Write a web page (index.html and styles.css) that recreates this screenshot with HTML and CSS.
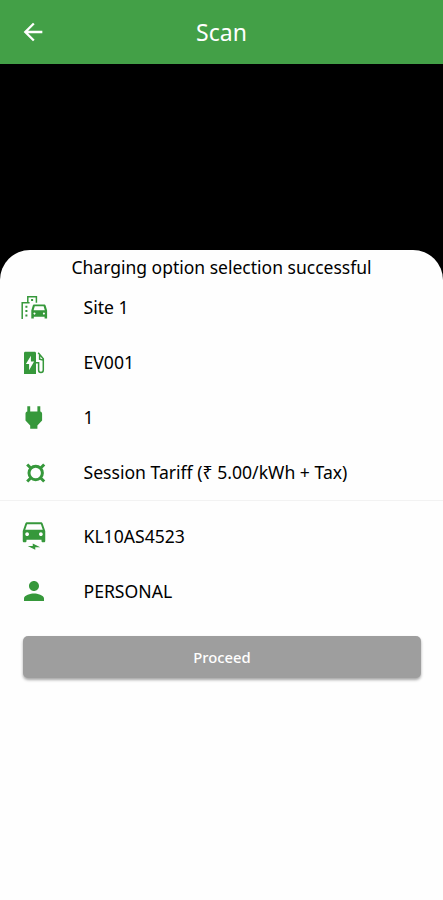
FILE: index.html
```
<!DOCTYPE html>
<html lang="en">
<head>
<meta charset="utf-8">
<title>Scan</title>
<link rel="stylesheet" href="styles.css">
</head>
<body>
<header class="bar">
  <svg class="back" viewBox="0 0 24 24"><path d="M20 11H7.83l5.59-5.59L12 4l-8 8 8 8 1.41-1.41L7.83 13H20z"/></svg>
  <h1 class="title">Scan</h1>
</header>
<main class="sheet">
  <h2 class="message">Charging option selection successful</h2>
  <ul class="rows">
    <li class="row">
      <svg class="icon" viewBox="0 0 30 30"><path class="line" d="M3.200 27V10.700h5.600V4.700h8.600v6M8.800 10.700h1.800"/><path d="M6.400 13.800h2v2h-2zM6.400 18.100h2v2h-2zM6.400 22.500h2v2h-2zM12.100 7.100h2v2h-2z"/><path fill-rule="evenodd" d="M15.300 12.600h9.800c.8 0 1.400.4 1.600 1.100l1.400 4.900v8h-2.500v-1.900H14.800v1.900h-2.500v-8l1.400-4.900c.2-.7.800-1.100 1.600-1.100zM15.800 14.300l-1.200 3.900h11.200l-1.200-3.900zM15.500 20.500a1 1 0 1 0 .01 0zM24.900 20.500a1 1 0 1 0 .01 0z"/></svg>
      <span class="label">Site 1</span>
    </li>
    <li class="row">
      <svg class="icon" viewBox="0 0 30 30"><path fill-rule="evenodd" d="M6.400 4.700h9.200c.8 0 1.400.6 1.400 1.400V27H5V6.100c0-.8.600-1.400 1.400-1.400zM11.900 8.700 6.900 17h3.200v6.300l5-8.800h-3.200z"/><path class="line" d="M17 15.700h2.600V23c0 3.400 4.700 3.400 4.700 0V11.700l-5.100-5.900M20.600 7.900v4.200l3.500 1"/></svg>
      <span class="label">EV001</span>
    </li>
    <li class="row">
      <svg class="icon" viewBox="0 0 30 30"><path d="M8.300 4.200h2.900v5.400h7.200V4.200h2.900v5.400c1.100.2 1.800 1 1.800 2.200v6.700l-4.700 5v3.200h-7.200v-3.200l-4.700-5v-6.700c0-1.200.7-2 1.800-2.200z"/></svg>
      <span class="label">1</span>
    </li>
    <li class="row">
      <svg class="icon" viewBox="0 0 30 30"><circle class="ring" cx="16.700" cy="16" r="6.700"/><path class="ring" d="m8.200 7.500 4 4M25.200 7.500l-4 4M8.200 24.500l4-4M25.200 24.500l-4-4"/></svg>
      <span class="label">Session Tariff (₹ 5.00/kWh + Tax)</span>
    </li>
  </ul>
  <ul class="rows vehicle">
    <li class="row">
      <svg class="icon" viewBox="0 0 24 24"><path d="M18.920 2.010C18.720 1.420 18.160 1 17.500 1h-11c-.66 0-1.210.42-1.420 1.010L3 8v8c0 .55.45 1 1 1h1c.55 0 1-.45 1-1v-1h12v1c0 .55.45 1 1 1h1c.55 0 1-.45 1-1V8l-2.080-5.990zM6.500 12c-.83 0-1.500-.67-1.500-1.500S5.670 9 6.500 9 8 9.670 8 10.500 7.330 12 6.500 12zm11 0c-.83 0-1.500-.67-1.500-1.500s.67-1.500 1.500-1.500 1.500.67 1.500 1.500-.67 1.500-1.500 1.500zM5 7l1.500-4.500h11L19 7H5zM7 20h4v-2l6 3h-4v2z"/></svg>
      <span class="label">KL10AS4523</span>
    </li>
    <li class="row">
      <svg class="icon" viewBox="0 0 24 24"><path d="M12 12c2.210 0 4-1.790 4-4s-1.790-4-4-4-4 1.790-4 4 1.790 4 4 4zm0 2c-2.670 0-8 1.340-8 4v2h16v-2c0-2.660-5.330-4-8-4z"/></svg>
      <span class="label">PERSONAL</span>
    </li>
  </ul>
  <button class="proceed" type="button">Proceed</button>
</main>
</body>
</html>
```
FILE: styles.css
```
* {
  box-sizing: border-box;
}

body {
  margin: 0;
  height: 900px;
  overflow: hidden;
  background: #000;
  color: #000;
  font-family: "Noto Sans", sans-serif;
}

.bar {
  display: grid;
  grid-template-columns: 66px 1fr 66px;
  align-items: center;
  height: 64px;
  margin-bottom: 186px;
  background: #43a047;
  color: #fff;
}

.back {
  width: 28px;
  height: 28px;
  margin-left: 19px;
  fill: #fff;
}

.title {
  margin: 0;
  font-size: 23px;
  font-weight: 400;
  line-height: 32px;
  text-align: center;
}

.sheet {
  height: 650px;
  border-radius: 30px 30px 0 0;
  background: #fefefe;
}

.message {
  margin: 0;
  padding-top: 4px;
  height: 29px;
  font-size: 17.5px;
  font-weight: 400;
  line-height: 26px;
  text-align: center;
}

.rows {
  margin: 0;
  padding: 0;
  list-style: none;
}

.row {
  display: flex;
  align-items: center;
  height: 55px;
  padding-left: 19px;
}

.vehicle {
  margin-top: 1px;
  padding-top: 7px;
  border-top: 1px solid #f2f2f2;
}

.icon {
  flex: none;
  width: 30px;
  height: 30px;
  margin-right: 34.5px;
  fill: #36983b;
}

.line {
  fill: none;
  stroke: #36983b;
  stroke-width: 1.5;
}

.ring {
  fill: none;
  stroke: #36983b;
  stroke-width: 3;
}

.label {
  font-size: 17.6px;
  line-height: 26px;
  white-space: nowrap;
}

.proceed {
  display: block;
  width: 398px;
  height: 42px;
  margin: 18px 22px 0 23px;
  padding: 0;
  border: 0;
  border-radius: 5px;
  background: #9e9e9e;
  box-shadow: 0 2px 3px rgba(0, 0, 0, 0.35);
  color: #fff;
  font: 500 14.8px/42px "Noto Sans", sans-serif;
}
```
